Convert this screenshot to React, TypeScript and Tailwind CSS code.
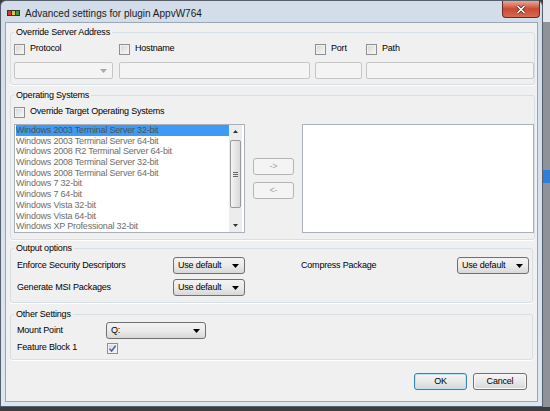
import React from "react";

const osList = [
  "Windows 2003 Terminal Server 32-bit",
  "Windows 2003 Terminal Server 64-bit",
  "Windows 2008 R2 Terminal Server 64-bit",
  "Windows 2008 Terminal Server 32-bit",
  "Windows 2008 Terminal Server 64-bit",
  "Windows 7 32-bit",
  "Windows 7 64-bit",
  "Windows Vista 32-bit",
  "Windows Vista 64-bit",
  "Windows XP Professional 32-bit",
];

function CheckBox({ checked = false }: { checked?: boolean }) {
  return (
    <span className="flex h-[11px] w-[11px] shrink-0 items-center justify-center border border-[#8e8f8f] bg-gradient-to-br from-[#d6d6d6] to-[#f9f9f9] shadow-[inset_0_0_0_1px_#f2f2f2]">
      {checked && (
        <svg width="9" height="9" viewBox="0 0 9 9">
          <path d="M1.5 4.8 L3.6 7 L7.6 1.8" fill="none" stroke="#4c63a0" strokeWidth="1.5" />
        </svg>
      )}
    </span>
  );
}

function Arrow({ color = "#000" }: { color?: string }) {
  return (
    <svg width="7" height="4" viewBox="0 0 7 4">
      <path d="M0 0 H7 L3.5 4 Z" fill={color} />
    </svg>
  );
}

// dropdown list (enabled)
function Combo({ value, className }: { value: string; className: string }) {
  return (
    <div
      className={`flex h-[17px] shrink-0 items-center justify-between rounded-[3px] border border-[#707070] bg-gradient-to-b from-[#f3f3f3] via-[#ebebeb] to-[#d8d8d8] pl-[4px] pr-[5px] ${className}`}
    >
      <span>{value}</span>
      <Arrow />
    </div>
  );
}

function GroupBox({
  title,
  className,
  children,
}: {
  title: string;
  className: string;
  children?: React.ReactNode;
}) {
  return (
    <fieldset
      className={`mx-[4px] shrink-0 rounded-[3px] border border-[#d5dfe5] shadow-[0_1px_0_#fff] ${className}`}
    >
      <legend className="ml-[3px] px-[2px] leading-[12px]">{title}</legend>
      {children}
    </fieldset>
  );
}

function MoveButton({ label }: { label: string }) {
  return (
    <div className="flex h-[17px] w-[41px] items-center justify-center rounded-[3px] border border-[#b5b5b5] bg-[#f4f4f4] text-[#a3a3a3]">
      {label}
    </div>
  );
}

function DialogButton({ label, focused }: { label: string; focused?: boolean }) {
  return (
    <div
      className={`flex h-[17px] items-center justify-center rounded-[3px] border bg-gradient-to-b from-[#f4f4f4] via-[#e9e9e9] to-[#d6d6d6] ${
        focused
          ? "w-[53px] border-[#3c7fb1] shadow-[inset_0_0_0_1px_#bfe3f7]"
          : "w-[54px] border-[#707070] shadow-[inset_0_0_0_1px_#fafafa]"
      }`}
    >
      {label}
    </div>
  );
}

export default function App() {
  return (
    <div className="flex h-[411px] w-[550px] overflow-hidden bg-[#3b3d40] font-['Liberation_Sans',Arial,sans-serif] text-[9px] tracking-[-0.2px] text-black">
      {/* window */}
      <div className="flex h-[407px] w-[543px] shrink-0 flex-col rounded-t-[6px] border border-[#56606c] bg-gradient-to-b from-[#d2dde9] to-[#dde7f2]">
        {/* title bar */}
        <div className="flex h-[21px] shrink-0 items-start">
          <div className="flex h-full items-center gap-[5px] pl-[6px] pt-[3px]">
            <div className="flex h-[6px] w-[13px] gap-[1px] border border-[#333] bg-[#333]">
              <span className="w-[3px] bg-[#d83a2a]" />
              <span className="w-[3px] bg-[#e8c32a]" />
              <span className="w-[3px] bg-[#3a9a3a]" />
            </div>
            <span className="text-[10px] tracking-normal text-[#1a1a1a]">
              Advanced settings for plugin AppvW764
            </span>
          </div>
          <div className="ml-auto mr-[2px] flex h-[17px] w-[38px] items-center justify-center rounded-b-[4px] border border-t-0 border-[#6b2a20] bg-gradient-to-b from-[#e9a797] via-[#c94a34] to-[#d66a52]">
            <svg width="10" height="9" viewBox="0 0 10 9">
              <path d="M1.5 1 L8.5 8 M8.5 1 L1.5 8" stroke="#5a1a12" strokeWidth="3" />
              <path d="M1.5 1 L8.5 8 M8.5 1 L1.5 8" stroke="#fff" strokeWidth="1.7" />
            </svg>
          </div>
        </div>

        {/* client area */}
        <div className="mx-[4px] mb-[4px] flex flex-1 flex-col border border-[#9aa6b4] bg-[#f0f0f0]">
          <GroupBox title="Override Server Address" className="mt-[3px] h-[59px]">
            <div className="mt-[4px] flex h-[14px] items-center pl-[3px]">
              <label className="flex w-[105px] items-center gap-[5px]">
                <CheckBox />
                Protocol
              </label>
              <label className="flex w-[196px] items-center gap-[5px]">
                <CheckBox />
                Hostname
              </label>
              <label className="flex w-[51px] items-center gap-[5px]">
                <CheckBox />
                Port
              </label>
              <label className="flex items-center gap-[5px]">
                <CheckBox />
                Path
              </label>
            </div>
            <div className="mt-[6px] flex h-[17px] pl-[3px]">
              <div className="flex w-[99px] items-center justify-end rounded-[2px] border border-[#c6c6c6] bg-[#f4f4f4] pr-[5px]">
                <Arrow color="#a8a8a8" />
              </div>
              <div className="ml-[6px] w-[191px] rounded-[2px] border border-[#c6c6c6] bg-[#f4f4f4]" />
              <div className="ml-[5px] w-[47px] rounded-[2px] border border-[#c6c6c6] bg-[#f4f4f4]" />
              <div className="ml-[4px] w-[168px] rounded-[2px] border border-[#c6c6c6] bg-[#f4f4f4]" />
            </div>
          </GroupBox>

          <GroupBox title="Operating Systems" className="mt-[4px] h-[151px]">
            <label className="mt-[5px] flex h-[12px] items-center gap-[5px] pl-[3px]">
              <CheckBox />
              Override Target Operating Systems
            </label>
            <div className="mt-[6px] flex items-start pl-[3px]">
              {/* source list */}
              <div className="flex h-[109px] w-[231px] border border-[#a9b0b8] bg-white">
                <div className="w-[214px] pl-[1px] text-[#6d6d6d]">
                  {osList.map((os, i) => (
                    <div
                      key={os}
                      className={`h-[10.7px] whitespace-nowrap leading-[10.7px] ${
                        i === 0 ? "bg-[#3d9bf5] text-[#505050]" : ""
                      }`}
                    >
                      {os}
                    </div>
                  ))}
                </div>
                <div className="flex w-[13px] flex-col items-center bg-[#ececec]">
                  <div className="flex h-[13px] items-center justify-center">
                    <svg width="5" height="3" viewBox="0 0 5 3">
                      <path d="M0 3 L2.5 0 L5 3 Z" fill="#333" />
                    </svg>
                  </div>
                  <div className="mt-[2px] flex h-[68px] w-[11px] items-center justify-center rounded-[2px] border border-[#9a9a9a] bg-gradient-to-r from-[#f4f4f4] to-[#d9d9d9]">
                    <svg width="5" height="5" viewBox="0 0 5 5">
                      <path d="M0 0.5 H5 M0 2.5 H5 M0 4.5 H5" stroke="#666" strokeWidth="1" />
                    </svg>
                  </div>
                  <div className="mt-auto flex h-[13px] items-center justify-center">
                    <svg width="5" height="3" viewBox="0 0 5 3">
                      <path d="M0 0 H5 L2.5 3 Z" fill="#333" />
                    </svg>
                  </div>
                </div>
              </div>

              <div className="ml-[8px] flex flex-col gap-[7px] pt-[34px]">
                <MoveButton label="->" />
                <MoveButton label="<-" />
              </div>

              {/* target list */}
              <div className="ml-[8px] h-[109px] w-[232px] border border-[#a9b0b8] bg-white" />
            </div>
          </GroupBox>

          <GroupBox title="Output options" className="mt-[2px] h-[61px]">
            <div className="mt-[3px] flex items-center pl-[6px]">
              <span className="w-[156px]">Enforce Security Descriptors</span>
              <Combo value="Use default" className="w-[72px]" />
              <span className="ml-[56px] w-[156px]">Compress Package</span>
              <Combo value="Use default" className="w-[72px]" />
            </div>
            <div className="mt-[5px] flex items-center pl-[6px]">
              <span className="w-[156px]">Generate MSI Packages</span>
              <Combo value="Use default" className="w-[72px]" />
            </div>
          </GroupBox>

          <GroupBox title="Other Settings" className="mt-[5px] h-[52px]">
            <div className="mt-[2px] flex items-center pl-[6px]">
              <span className="w-[89px]">Mount Point</span>
              <Combo value="Q:" className="w-[100px]" />
            </div>
            <div className="mt-[3px] flex h-[12px] items-center pl-[6px]">
              <span className="w-[90px]">Feature Block 1</span>
              <CheckBox checked />
            </div>
          </GroupBox>

          <div className="mt-[13px] flex justify-end gap-[6px] pr-[10px]">
            <DialogButton label="OK" focused />
            <DialogButton label="Cancel" />
          </div>
        </div>
      </div>

      {/* desktop behind the dialog */}
      <div className="flex flex-1 flex-col">
        <div className="h-[22px] bg-[#e3e6ea]" />
        <div className="flex h-[385px] flex-col bg-[#8f9399]">
          <div className="mt-[148px] h-[13px] bg-[#2f7fd8]" />
        </div>
      </div>
    </div>
  );
}
